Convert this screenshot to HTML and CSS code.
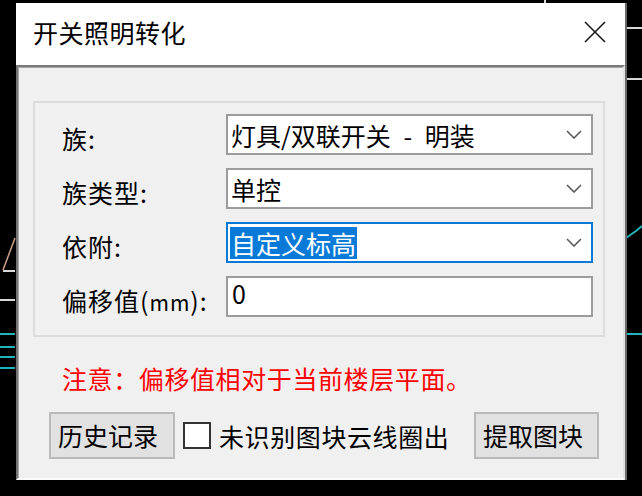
FILE: index.html
```html
<!DOCTYPE html>
<html lang="zh-CN">
<head>
  <meta charset="UTF-8" />
  <meta name="viewport" content="width=device-width, initial-scale=1.0"/>
  <title>开关照明转化</title>
  <link rel="stylesheet" href="styles.css">
</head>
<body>

<!-- CAD drawing behind the dialog -->
<svg class="cad" width="642" height="496" viewBox="0 0 642 496">
  <g stroke="#d8d8d8" stroke-width="2" fill="none">
    <line x1="627" y1="28" x2="642" y2="28"/>
    <line x1="627" y1="79" x2="642" y2="79"/>
    <line x1="3" y1="271" x2="15" y2="271"/>
    <line x1="0" y1="300" x2="15" y2="300"/>
    <line x1="545" y1="0" x2="545" y2="3"/>
  </g>
  <line x1="3" y1="270" x2="15" y2="238" stroke="#c9a08a" stroke-width="1.5"/>
  <g stroke="#1fb5b8" stroke-width="2" fill="none">
    <line x1="0" y1="334" x2="15" y2="334"/>
    <line x1="0" y1="347" x2="15" y2="347"/>
    <line x1="0" y1="357" x2="15" y2="357"/>
    <line x1="0" y1="368" x2="15" y2="368"/>
    <line x1="627" y1="334" x2="642" y2="334"/>
    <polyline points="626,238 636,231 642,226"/>
  </g>
</svg>

<div class="dialog">
  <div class="titlebar">
    <span class="title">开关照明转化</span>
    <svg class="close" width="22" height="22" viewBox="0 0 22 22">
      <path d="M1 1 L21 21 M21 1 L1 21" stroke="#1a1a1a" stroke-width="1.6" fill="none"/>
    </svg>
  </div>

  <div class="panel">
    <div class="group">
      <span class="label">族:</span>
      <div class="combo">
        <span class="value">灯具/双联开关 - 明装</span>
        <svg class="chevron" width="16" height="9" viewBox="0 0 16 9"><polyline points="1,1 8,8 15,1"/></svg>
      </div>

      <span class="label">族类型:</span>
      <div class="combo">
        <span class="value">单控</span>
        <svg class="chevron" width="16" height="9" viewBox="0 0 16 9"><polyline points="1,1 8,8 15,1"/></svg>
      </div>

      <span class="label">依附:</span>
      <div class="combo focused">
        <span class="value selected">自定义标高</span>
        <svg class="chevron" width="16" height="9" viewBox="0 0 16 9"><polyline points="1,1 8,8 15,1"/></svg>
      </div>

      <span class="label">偏移值(<span class="unit">mm</span>):</span>
      <div class="textbox">0</div>
    </div>

    <p class="note">注意：偏移值相对于当前楼层平面。</p>

    <div class="actions">
      <button class="btn">历史记录</button>
      <label class="check"><span class="box"></span>未识别图块云线圈出</label>
      <button class="btn btn-right">提取图块</button>
    </div>
  </div>
</div>

</body>
</html>
```

FILE: styles.css
```css
body {
  margin: 0;
  width: 642px;
  height: 496px;
  overflow: hidden;
  background: #000;
  position: relative;
  font-family: "Noto Sans CJK SC", "Noto Sans", sans-serif;
  color: #000;
}

.cad {
  position: absolute;
  top: 0;
  left: 0;
}

.dialog {
  position: relative;
  margin: 3px 0 0 16px;
  width: 611px;
  height: 477px;
  display: flex;
  flex-direction: column;
  border-right: 2px solid #6a6a6a;
  box-sizing: border-box;
}

.titlebar {
  height: 62px;
  background: #fff;
  display: flex;
  align-items: center;
  justify-content: space-between;
  padding: 0 19px 4px 17px;
  box-sizing: border-box;
}

.title {
  font-size: 25px;
  letter-spacing: 0.5px;
}

.panel {
  flex: 1;
  background: #f0f0f0;
  border-top: 2px solid #7a7a7a;
  border-left: 2px solid #747474;
  border-right: 2px solid #e3e3e3;
  border-bottom: 2px solid #fafafa;
  box-shadow: inset 1px 1px 0 #a8a8a8;
  display: flex;
  flex-direction: column;
}

.group {
  margin: 34px 0 0 15px;
  width: 572px;
  height: 236px;
  box-sizing: border-box;
  border: 2px solid #dcdcdc;
  padding: 11px 10px 18px 27px;
  display: grid;
  grid-template-columns: 164px 367px;
  grid-auto-rows: 41px;
  row-gap: 13px;
  align-items: center;
}

.label {
  font-size: 25px;
  letter-spacing: 1px;
  padding-top: 6px;
  white-space: nowrap;
}

.unit {
  font-size: 21px;
}

.combo {
  height: 41px;
  box-sizing: border-box;
  border: 2px solid #9c9c9c;
  background: #fff;
  display: flex;
  align-items: center;
  justify-content: space-between;
  padding: 0 9px 0 2px;
}

.combo.focused {
  border-color: #0a7ad8;
}

.value {
  font-size: 25px;
  line-height: 32px;
  padding-left: 1px;
  white-space: pre;
  word-spacing: 7px;
}

.value.selected {
  background: #0a7ad8;
  color: #fff;
  padding: 0 1px;
}

.chevron {
  fill: none;
  stroke: #5a5a5a;
  stroke-width: 1.6;
}

.textbox {
  height: 41px;
  box-sizing: border-box;
  border: 2px solid #9c9c9c;
  background: #fff;
  font-size: 25px;
  line-height: 30px;
  padding-left: 4px;
}

.note {
  margin: 24px 0 0 44px;
  font-size: 25px;
  line-height: 34px;
  color: #ff0000;
  letter-spacing: 0.6px;
}

.actions {
  margin-top: 17px;
  display: flex;
  align-items: center;
  padding: 0 24px 0 31px;
}

.btn {
  width: 126px;
  height: 47px;
  box-sizing: border-box;
  background: #e1e1e1;
  border: 2px solid #b9b9b9;
  font-family: inherit;
  font-size: 25px;
  text-align: left;
  padding: 0 0 2px 7px;
  color: #000;
}

.btn-right {
  margin-left: auto;
  width: 125px;
}

.check {
  display: flex;
  align-items: center;
  gap: 8px;
  margin-left: 8px;
  font-size: 25px;
  letter-spacing: 0.6px;
}

.box {
  width: 28px;
  height: 27px;
  box-sizing: border-box;
  border: 2px solid #333;
  background: #fff;
}
```
